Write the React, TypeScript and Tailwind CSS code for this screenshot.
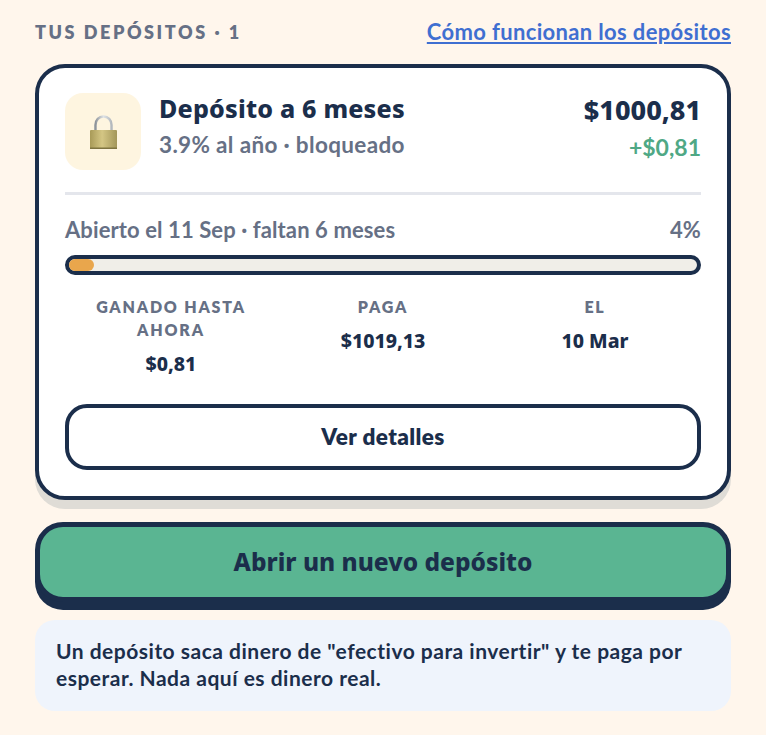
const body = "font-['Lato','Noto_Sans',sans-serif]";
const display = "font-['Noto_Sans','Lato',sans-serif]";

function Lock() {
  return (
    <svg width="27" height="34" viewBox="0 0 27 34">
      <defs>
        <linearGradient id="lockBody" x1="0" y1="0" x2="1" y2="0">
          <stop offset="0" stopColor="#a89a58" />
          <stop offset="0.45" stopColor="#d4c684" />
          <stop offset="1" stopColor="#a3965a" />
        </linearGradient>
        <linearGradient id="lockBar" x1="0" y1="0" x2="1" y2="0">
          <stop offset="0" stopColor="#8e949b" />
          <stop offset="0.5" stopColor="#dfe3e6" />
          <stop offset="1" stopColor="#b4b9be" />
        </linearGradient>
      </defs>
      <path d="M5.500 16V10C5.500 5 9 1.500 13.500 1.500S21.500 5 21.500 10V16" fill="none" stroke="url(#lockBar)" strokeWidth="2.500" />
      <rect x="0" y="15" width="27" height="19" rx="1" fill="url(#lockBody)" />
      <rect x="0" y="32.500" width="27" height="1.500" fill="#7f7440" />
    </svg>
  );
}

function Stat({ label, value }: { label: React.ReactNode; value: string }) {
  return (
    <div className="flex flex-col items-center text-center">
      <p className="text-[16px] leading-[23px] font-extrabold tracking-[1.8px] text-[#667085]">{label}</p>
      <p className={`${display} mt-[11px] text-[19.500px] leading-[24px] font-extrabold text-[#1b2e4b]`}>{value}</p>
    </div>
  );
}

export default function App() {
  return (
    <div className={`${body} h-[735px] w-[766px] overflow-hidden bg-[#fff6ec] px-[35px] pt-[19px]`}>
      <div className="flex items-center justify-between">
        <h2 className="text-[18px] leading-[26px] font-extrabold tracking-[2.55px] text-[#667085]">TUS DEPÓSITOS · 1</h2>
        <a className="text-[22px] leading-[26px] font-bold tracking-[0.35px] text-[#3f6fd1] underline">Cómo funcionan los depósitos</a>
      </div>

      <div className="mt-[19px] h-[436px] rounded-[30px] border-[4px] border-[#1b2e4b] bg-white px-[26px] pt-[25px] shadow-[0_9px_0_#dfdcd6]">
        <div className="flex gap-[18px]">
          <div className="flex h-[77px] w-[76px] shrink-0 items-center justify-center rounded-[18px] bg-[#fef5e0]">
            <Lock />
          </div>
          <div className="flex-1">
            <p className={`${display} text-[25px] leading-[30px] font-extrabold tracking-[0.2px] text-[#1b2e4b]`}>Depósito a 6 meses</p>
            <p className="mt-[9px] text-[22.500px] leading-[26px] font-bold tracking-[0.35px] text-[#667085]">3.9% al año · bloqueado</p>
          </div>
          <div className="pt-[2px] text-right">
            <p className={`${display} text-[27px] leading-[30px] font-extrabold text-[#1b2e4b]`}>$1000,81</p>
            <p className="mt-[9px] text-[23px] leading-[26px] font-bold text-[#4fa885]">+$0,81</p>
          </div>
        </div>

        <div className="mt-[22px] h-[3px] bg-[#e4e6ec]" />

        <div className="mt-[21px] flex justify-between text-[22px] leading-[28px] font-bold tracking-[0.1px] text-[#667085]">
          <span>Abierto el 11 Sep · faltan 6 meses</span>
          <span>4%</span>
        </div>

        <div className="mt-[11px] h-[20px] rounded-full border-[4px] border-[#1b2e4b] bg-[#f0eee8]">
          <div className="h-full w-[4%] rounded-full bg-[#e9a64c]" />
        </div>

        <div className="mt-[20px] grid grid-cols-3">
          <Stat label={<>GANADO HASTA<br />AHORA</>} value="$0,81" />
          <Stat label="PAGA" value="$1019,13" />
          <Stat label="EL" value="10 Mar" />
        </div>

        <button className="mt-[28px] h-[66px] w-full rounded-[22px] border-[4px] border-[#1b2e4b] bg-white text-[22.500px] font-extrabold tracking-[0.4px] text-[#1b2e4b]">
          Ver detalles
        </button>
      </div>

      <button className={`${display} mt-[22px] block h-[80px] w-full rounded-[28px] border-[5px] border-[#1b2e4b] bg-[#5ab592] text-[24.500px] font-extrabold text-[#1b2e4b] shadow-[0_8px_0_#1b2e4b]`}>
        Abrir un nuevo depósito
      </button>

      <div className="mt-[18px] flex h-[91px] items-center rounded-[20px] bg-[#eff4fc] px-[21px] pb-[4px] text-[21px] leading-[27px] font-bold tracking-[0.5px] text-[#1b2e4b]">
        <p>Un depósito saca dinero de "efectivo para invertir" y te paga por esperar. Nada aquí es dinero real.</p>
      </div>
    </div>
  );
}
